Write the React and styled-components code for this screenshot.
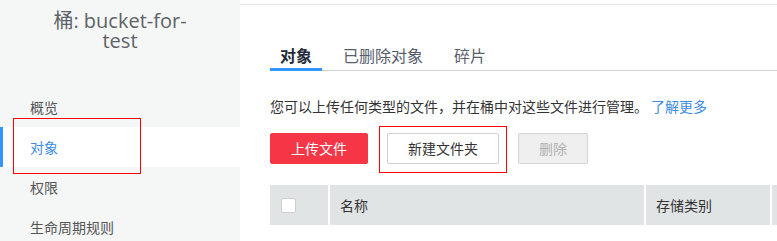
import React from "react";
import styled, { createGlobalStyle } from "styled-components";

const GlobalStyle = createGlobalStyle`
  html, body {
    margin: 0;
    padding: 0;
    background: #fff;
    overflow: hidden;
  }
  body {
    font-family: "Open Sans", "Noto Sans CJK SC", sans-serif;
    color: #333;
  }
`;

const Page = styled.div({
  display: "flex",
  height: "241px",
  width: "777px",
  overflow: "hidden"
});

const Sidebar = styled.aside({
  background: "#f5f7f7",
  flex: "0 0 240px",
  height: "100%"
});

const Title = styled.h1({
  color: "#5f6266",
  fontSize: "20px",
  fontWeight: 400,
  lineHeight: "20px",
  margin: "11px 40px 0",
  textAlign: "center"
});

const Nav = styled.ul({
  listStyle: "none",
  margin: "36px 0 0",
  padding: 0
});

const NavItem = styled.li(({ $active }) => ({
  background: $active ? "#fff" : "transparent",
  borderLeft: `3px solid ${$active ? "#3296fa" : "transparent"}`,
  boxSizing: "border-box",
  color: $active ? "#3d8ce6" : "#555",
  fontFamily: '"Noto Sans CJK SC", sans-serif',
  fontSize: "14px",
  height: "40px",
  lineHeight: "40px",
  paddingLeft: "27px",
  position: "relative"
}));

const Mark = styled.span({
  border: "1px solid #f00",
  boxSizing: "border-box",
  pointerEvents: "none",
  position: "absolute"
});

const NavMark = styled(Mark)({
  height: "56px",
  left: "10px",
  top: "-9px",
  width: "128px"
});

const Main = styled.main({
  borderTop: "1px solid #e6e6e6",
  flex: "1 1 auto",
  marginTop: "4px",
  minWidth: 0,
  overflow: "hidden",
  paddingLeft: "30px"
});

const Tabs = styled.div({
  borderBottom: "1px solid #cfcfcf",
  display: "flex",
  gap: "11px",
  marginTop: "39px"
});

const Tab = styled.div(({ $active }) => ({
  borderBottom: `3px solid ${$active ? "#3296fa" : "transparent"}`,
  color: $active ? "#252b3a" : "#575d6c",
  fontFamily: '"Noto Sans CJK SC", sans-serif',
  fontSize: "16px",
  fontWeight: $active ? 700 : 400,
  lineHeight: "22px",
  marginBottom: "-1px",
  padding: "0 10px 2px"
}));

const Intro = styled.p({
  color: "#333",
  fontFamily: '"Noto Sans CJK SC", sans-serif',
  fontSize: "14px",
  lineHeight: "22px",
  margin: "24px 0 0"
});

const More = styled.a({
  color: "#3d8ce6",
  marginLeft: "3px",
  textDecoration: "none"
});

const Toolbar = styled.div({
  alignItems: "flex-start",
  display: "flex",
  gap: "19px",
  marginTop: "16px"
});

const variants = {
  primary: { background: "#f53647", border: "#f53647", color: "#fff" },
  normal: { background: "#fff", border: "#d0d0d0", color: "#333" },
  disabled: { background: "#efefef", border: "#d5d5d5", color: "#b0b0b0" }
};

const Button = styled.button(({ $variant = "normal" }) => ({
  background: variants[$variant].background,
  border: `1px solid ${variants[$variant].border}`,
  borderRadius: "2px",
  boxSizing: "border-box",
  color: variants[$variant].color,
  cursor: $variant === "disabled" ? "default" : "pointer",
  fontFamily: '"Noto Sans CJK SC", sans-serif',
  fontSize: "14px",
  height: "31px",
  lineHeight: "29px",
  padding: "0 20px"
}));

const Annotated = styled.span({
  display: "inline-flex",
  position: "relative"
});

const ButtonMark = styled(Mark)({
  bottom: "-9px",
  left: "-8px",
  right: "-8px",
  top: "-7px"
});

const TableHead = styled.div({
  background: "#fff",
  display: "grid",
  gap: "2px",
  gridTemplateColumns: "58px 314px 124px 200px",
  height: "40px",
  marginTop: "21px",
  width: "max-content"
});

const HeadCell = styled.div({
  alignItems: "center",
  background: "#e1e4e5",
  color: "#333",
  display: "flex",
  fontFamily: '"Noto Sans CJK SC", sans-serif',
  fontSize: "14px",
  padding: "0 10px"
});

const CheckCell = styled(HeadCell)({
  paddingLeft: "11px"
});

const Checkbox = styled.span({
  background: "#fff",
  border: "1px solid #cfcfcf",
  borderRadius: "2px",
  boxSizing: "border-box",
  display: "block",
  height: "15px",
  width: "15px"
});

const navItems = ["概览", "对象", "权限", "生命周期规则"];
const tabs = ["对象", "已删除对象", "碎片"];

const App = () => (
  <>
    <GlobalStyle />
    <Page>
      <Sidebar>
        <Title>桶: bucket-for-test</Title>
        <Nav>
          {navItems.map(item => (
            <NavItem key={item} $active={item === "对象"}>
              {item}
              {item === "对象" && <NavMark />}
            </NavItem>
          ))}
        </Nav>
      </Sidebar>

      <Main>
        <Tabs>
          {tabs.map((tab, i) => (
            <Tab key={tab} $active={i === 0}>
              {tab}
            </Tab>
          ))}
        </Tabs>

        <Intro>
          您可以上传任何类型的文件，并在桶中对这些文件进行管理。
          <More href="#">了解更多</More>
        </Intro>

        <Toolbar>
          <Button $variant="primary">上传文件</Button>
          <Annotated>
            <Button>新建文件夹</Button>
            <ButtonMark />
          </Annotated>
          <Button $variant="disabled" disabled>
            删除
          </Button>
        </Toolbar>

        <TableHead>
          <CheckCell>
            <Checkbox />
          </CheckCell>
          <HeadCell>名称</HeadCell>
          <HeadCell>存储类别</HeadCell>
          <HeadCell />
        </TableHead>
      </Main>
    </Page>
  </>
);

export default App;
